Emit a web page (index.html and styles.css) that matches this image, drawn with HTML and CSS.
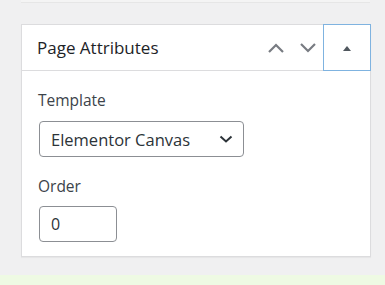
FILE: index.html
```html
<!DOCTYPE html>
<html lang="en">
<head>
  <meta charset="UTF-8">
  <title>Page Attributes</title>
  <link rel="stylesheet" href="styles.css">
</head>
<body>
  <div class="prev-box"></div>

  <div class="postbox">
    <div class="postbox-header">
      <h2 class="hndle">Page Attributes</h2>
      <div class="handle-actions">
        <button class="order-btn" aria-label="Move up">
          <svg width="18" height="10" viewBox="0 0 18 10"><path d="M2 9 L9 2 L16 9" fill="none" stroke="#787c82" stroke-width="2.2"/></svg>
        </button>
        <button class="order-btn" aria-label="Move down">
          <svg width="18" height="10" viewBox="0 0 18 10"><path d="M2 1 L9 8 L16 1" fill="none" stroke="#787c82" stroke-width="2.2"/></svg>
        </button>
        <button class="toggle-btn" aria-label="Toggle panel">
          <svg width="10" height="6" viewBox="0 0 10 6"><path d="M1 6 L5 1 L9 6 Z" fill="#50575e"/></svg>
        </button>
      </div>
    </div>

    <div class="inside">
      <p class="field-label">Template</p>
      <div class="select">
        <span>Elementor Canvas</span>
        <svg width="14" height="8" viewBox="0 0 14 8"><path d="M1.5 1.5 L7 6.5 L12.5 1.5" fill="none" stroke="#2c3338" stroke-width="2"/></svg>
      </div>

      <p class="field-label">Order</p>
      <div class="number-input">0</div>
    </div>
  </div>

  <div class="notice"></div>
</body>
</html>
```

FILE: styles.css
```css
body {
  margin: 0;
  background: #f0f0f1;
  font-family: "Open Sans", "Noto Sans", sans-serif;
  color: #3c434a;
  height: 285px;
  overflow: hidden;
}
.prev-box {
  margin: 0 15px 0 21px;
  height: 2px;
  background: #f4f4f4;
  border-bottom: 1px solid #e6e6e6;
}
.postbox {
  margin: 21px 15px 0 21px;
  width: 348px;
  background: #fff;
  border: 1px solid #dcdcde;
  box-shadow: 0 1px 1px rgba(0, 0, 0, 0.04);
}
.postbox-header {
  display: flex;
  align-items: center;
  justify-content: space-between;
  height: 45px;
  border-bottom: 1px solid #dcdcde;
}
.hndle {
  margin: 0 0 0 15px;
  font-size: 17px;
  font-weight: 400;
  color: #1d2327;
}
.handle-actions {
  display: flex;
  align-items: center;
  height: 45px;
}
.order-btn {
  width: 32px;
  height: 36px;
  padding: 0;
  border: none;
  background: none;
  display: flex;
  align-items: center;
  justify-content: center;
}
.toggle-btn {
  width: 48px;
  height: 47px;
  margin: -1px -1px -1px -1px;
  padding: 0;
  border: 1px solid #7fb3e0;
  background: none;
  display: flex;
  align-items: center;
  justify-content: center;
}
.inside {
  padding: 19px 15px 14px 16px;
}
.field-label {
  margin: 0;
  font-size: 15.5px;
  line-height: 20px;
  color: #3c434a;
}
.select {
  display: flex;
  align-items: center;
  justify-content: space-between;
  box-sizing: border-box;
  width: 205px;
  height: 36px;
  margin: 11px 0 19px 1px;
  padding: 0 10px 0 11px;
  border: 1px solid #8c8f94;
  border-radius: 4px;
  font-size: 16.5px;
  color: #2c3338;
}
.number-input {
  box-sizing: border-box;
  width: 78px;
  height: 36px;
  margin: 10px 0 0 1px;
  padding: 0 11px;
  line-height: 34px;
  border: 1px solid #8c8f94;
  border-radius: 4px;
  font-size: 16px;
  color: #2c3338;
}
.notice {
  margin-top: 18px;
  height: 20px;
  background: #eefae3;
}
```
